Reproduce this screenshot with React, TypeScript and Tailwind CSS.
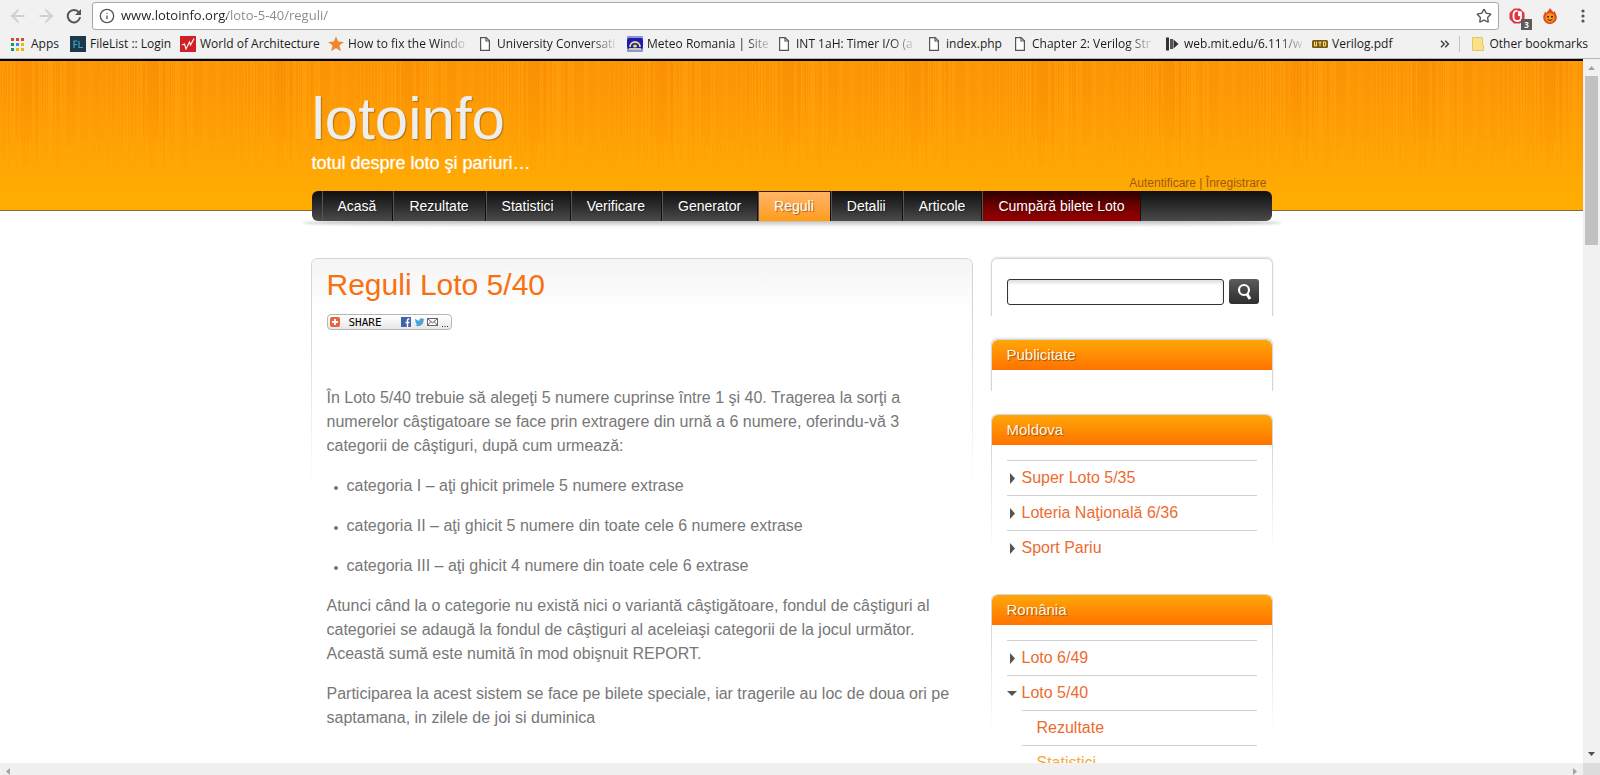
import React from "react";
import { ArrowLeft, ArrowRight, Info, Star } from "lucide-react";

/* ---------- Browser chrome ---------- */

const PageIcon = () => (
  <svg viewBox="0 0 16 16" className="size-4" fill="#fff" stroke="#555" strokeWidth="1.2">
    <path d="M3.6 1.6h5.6l3.2 3.2v9.6H3.6z" />
    <path d="M9 1.8v3.2h3.3" fill="none" />
  </svg>
);

const APP_COLORS = ["#db4437", "#db4437", "#e0433c", "#0f9d58", "#4285f4", "#f4b400", "#0f9d58", "#f4b400", "#f4b400"];

const AppsIcon = () => (
  <svg viewBox="0 0 16 16" className="size-4" shapeRendering="crispEdges">
    {APP_COLORS.map((c, i) => (
      <rect key={i} x={(i % 3) * 5} y={2 + Math.floor(i / 3) * 5} width="3" height="3" fill={c} />
    ))}
  </svg>
);

const FileListIcon = () => (
  <svg viewBox="0 0 16 16" className="size-4" fill="none">
    <rect width="16" height="16" fill="#1d3a4c" />
    <path d="M4 12V5h3.5M4 8.5h3M9 5v6.5h4" stroke="#35a5c0" strokeWidth="1.2" />
  </svg>
);

const ArchitectureIcon = () => (
  <svg viewBox="0 0 16 16" className="size-4" fill="none">
    <rect width="16" height="16" fill="#cf2027" />
    <path d="M2 9l2.500-1L6 13l3.500-7 1 3L14 2.500" stroke="#fff" strokeWidth="1.1" />
  </svg>
);

const OrangeStarIcon = () => (
  <svg viewBox="0 0 16 16" className="size-4">
    <path d="M8 .3l2.100 5.300 5.700.3-4.400 3.600 1.500 5.700L8 12.100l-4.900 3.100 1.500-5.700L.2 5.900l5.700-.3z" fill="#f0852d" />
  </svg>
);

const MeteoIcon = () => (
  <svg viewBox="0 0 16 16" className="size-4">
    <rect width="16" height="16" rx="1" fill="#8d93dc" />
    <rect y="2" width="16" height="11" rx="2" fill="#1c1cb4" />
    <path d="M3 11a5 5 0 0 1 10 0" stroke="#e8e060" strokeWidth="1.800" fill="none" />
    <ellipse cx="8" cy="10" rx="2" ry="1.500" fill="#e8e060" />
    <rect x="2" y="12" width="12" height="2" fill="#c8ccb0" />
  </svg>
);

const MitIcon = () => (
  <svg viewBox="0 0 16 16" className="size-4" fill="#333">
    <rect x="2" y="1.500" width="3" height="13" />
    <rect x="6" y="3" width="3" height="10" fill="#555" />
    <path d="M9.500 3.500l5 4.500-5 4.500z" />
  </svg>
);

const UtdIcon = () => (
  <svg viewBox="0 0 16 16" className="size-4" fill="none">
    <rect y="4" width="16" height="8" rx="1.500" fill="#7a5a12" />
    <path d="M2.500 5.800v4h2v-4M6.500 6.200h3M8 6.200v4M11.500 6v4h1.500l.7-1V7l-.7-1z" stroke="#f6e27a" strokeWidth="1.100" />
  </svg>
);

type Bookmark = { label: string; icon: React.ReactNode; width: string; fade?: boolean };

const BOOKMARKS: Bookmark[] = [
  { label: "Apps", icon: <AppsIcon />, width: "w-[59px]" },
  { label: "FileList :: Login", icon: <FileListIcon />, width: "w-[110px]" },
  { label: "World of Architecture", icon: <ArchitectureIcon />, width: "w-[148px]" },
  { label: "How to fix the Windo", icon: <OrangeStarIcon />, width: "w-[149px]", fade: true },
  { label: "University Conversati", icon: <PageIcon />, width: "w-[150px]", fade: true },
  { label: "Meteo Romania | Site", icon: <MeteoIcon />, width: "w-[149px]", fade: true },
  { label: "INT 1aH: Timer I/O (a", icon: <PageIcon />, width: "w-[150px]", fade: true },
  { label: "index.php", icon: <PageIcon />, width: "w-[86px]" },
  { label: "Chapter 2: Verilog Str", icon: <PageIcon />, width: "w-[152px]", fade: true },
  { label: "web.mit.edu/6.111/w", icon: <MitIcon />, width: "w-[148px]", fade: true },
  { label: "Verilog.pdf", icon: <UtdIcon />, width: "w-[110px]" },
];

function BrowserBar() {
  return (
    <div className="shrink-0 border-b border-[#b4b4b4] bg-[#f1f1f1] font-['Open_Sans',sans-serif] text-[#1c1c1c]">
      <div className="flex h-[30px] items-center pt-[2px]">
        <button aria-label="Back" className="ml-1 flex w-7 justify-center text-[#cfcfcf]">
          <ArrowLeft size={20} strokeWidth={2.2} />
        </button>
        <button aria-label="Forward" className="flex w-7 justify-center text-[#cfcfcf]">
          <ArrowRight size={20} strokeWidth={2.2} />
        </button>
        <button aria-label="Reload" className="ml-1 mr-2 flex w-5 justify-center">
          <svg viewBox="0 0 16 16" className="size-4" fill="none" stroke="#555" strokeWidth="2">
            <path d="M13 4.500A6.200 6.200 0 1 0 14.100 9.200" />
            <path d="M15 1v6H9z" fill="#555" stroke="none" />
          </svg>
        </button>
        <div className="flex h-7 min-w-0 flex-1 items-center rounded-[3px] border border-[#a6a6a6] bg-white">
          <Info size={16} strokeWidth={2} className="ml-[6px] shrink-0 text-[#555]" />
          <input
            aria-label="Address"
            defaultValue="www.lotoinfo.org/loto-5-40/reguli/"
            className="ml-[6px] min-w-0 flex-1 bg-[linear-gradient(to_right,#222_106px,#888_106px)] bg-clip-text text-[13px] text-transparent outline-none"
          />
          <button aria-label="Bookmark this page" className="mr-[6px]">
            <Star size={16} strokeWidth={2} className="text-[#555]" />
          </button>
        </div>
        <button aria-label="Ad blocker" className="relative ml-[10px] flex">
          <svg viewBox="0 0 16 16" className="size-4" fill="none">
            <path d="M5 .5h6L15.500 5v6L11 15.500H5L.5 11V5z" fill="#e2343f" />
            <path d="M8.500 3Q4.500 2.500 4.500 7v2q0 4 4 4 3.500 0 3.500-3.500V3.500L10 8V3" stroke="#fff" strokeWidth="1.800" />
          </svg>
          <span className="absolute -right-[7px] top-[11px] flex h-[11px] w-[11px] items-center justify-center bg-[#5c5c5c] text-[8px] font-bold text-white">3</span>
        </button>
        <button aria-label="Flame extension" className="ml-[17px] flex">
          <svg viewBox="0 0 16 16" className="size-4">
            <path d="M8 0c1 2 3 2.500 3 4.500l2-1.500c-.3 2 1.800 3.200 1.800 6.200A6.500 6.500 0 0 1 8 16 6.500 6.500 0 0 1 1.200 9.500c0-2.500 1.600-3.500 1.600-6l2 1.500C5 3 7 2.500 8 0z" fill="#e2491d" />
            <circle cx="8" cy="9.800" r="4.600" fill="#f79a1c" />
            <circle cx="6" cy="8.800" r="1" fill="#40200c" />
            <circle cx="10" cy="8.800" r="1" fill="#40200c" />
            <path d="M5.500 11.500q2.500 2 5 0" stroke="#40200c" fill="none" />
          </svg>
        </button>
        <button aria-label="Menu" className="ml-[17px] mr-[9px] flex">
          <svg viewBox="0 0 16 16" className="size-4" fill="#555">
            <circle cx="8" cy="3" r="1.600" />
            <circle cx="8" cy="8" r="1.600" />
            <circle cx="8" cy="13" r="1.600" />
          </svg>
        </button>
      </div>
      <div className="flex h-7 items-center pl-[11px] text-[12px]">
        {BOOKMARKS.map((b) => (
          <a key={b.label} href="#" className={`flex shrink-0 items-center gap-1 ${b.width}`}>
            <span className="shrink-0">{b.icon}</span>
            <span className={b.fade ? "whitespace-nowrap [mask-image:linear-gradient(to_right,#000_80%,rgba(0,0,0,.15))]" : "whitespace-nowrap"}>
              {b.label}
            </span>
          </a>
        ))}
        <button aria-label="More bookmarks" className="ml-auto">
          <svg viewBox="0 0 10 8" className="h-2 w-[10px]" fill="none" stroke="#444" strokeWidth="1.500">
            <path d="M1 .8L4.200 4 1 7.200M5.200.8L8.400 4 5.200 7.200" />
          </svg>
        </button>
        <span className="ml-[9px] h-4 w-px bg-[#c4c4c4]" />
        <a href="#" className="ml-3 mr-3 flex items-center gap-[5px] whitespace-nowrap">
          <svg viewBox="0 0 12 14" className="h-[14px] w-3">
            <path d="M.5.5h10v8h1v5H.5z" fill="#fbe08a" stroke="#e5c661" />
          </svg>
          Other bookmarks
        </a>
      </div>
    </div>
  );
}

/* ---------- Site header ---------- */

// Pseudo-random but stable streaks, tiled every 127 px.
const STREAKS = Array.from({ length: 127 }, (_, i) => {
  const r = Math.abs(Math.sin(i * 12.9898) * 43758.5453) % 1;
  const cluster = 0.5 + 0.5 * Math.cos(((i - 30) / 127) * Math.PI * 2);
  return { x: i, dark: r > 0.35, alpha: 0.06 + 0.26 * r * (0.4 + cluster * 0.6), h: 70 + ((r * 997) % 1) * 60 };
});

function Texture() {
  return (
    <svg aria-hidden="true" className="absolute inset-0 h-full w-full [mask-image:linear-gradient(#000_20%,transparent_85%)]" shapeRendering="crispEdges">
      <defs>
        <pattern id="streaks" width="127" height="150" patternUnits="userSpaceOnUse">
          {STREAKS.map((s) => (
            <rect key={s.x} x={s.x} y="0" width="1" height={s.h} fill={s.dark ? "#f07a00" : "#ffb520"} opacity={s.alpha} />
          ))}
        </pattern>
      </defs>
      <rect width="100%" height="100%" fill="url(#streaks)" />
    </svg>
  );
}

const NAV = ["Acasă", "Rezultate", "Statistici", "Verificare", "Generator", "Reguli", "Detalii", "Articole", "Cumpără bilete Loto"];

function navTone(label: string) {
  if (label === "Reguli") return "bg-linear-to-b from-[#ffb566] to-[#ff9c0a] shadow-[inset_0_1px_0_#2a1c08]";
  if (label === "Cumpără bilete Loto") return "bg-linear-to-b from-[#2a0000] via-[#700000] to-[#980000]";
  return "";
}

function SiteHeader() {
  return (
    <>
      <header className="relative h-[152px] border-b border-t-2 border-b-[#7d6a45] border-t-black bg-[linear-gradient(#ff9808,#ffa505_60%,#ffad00)]">
        <Texture />
        <div className="relative mx-auto flex max-w-[960px] items-end justify-between pt-[26px]">
          <div>
            <h1 className="text-[60px] leading-[64px] text-[#eee] [text-shadow:1px_1px_1px_rgba(120,80,20,.6)]">lotoinfo</h1>
            <p className="text-[18px] leading-6 text-white [text-shadow:0_0_1px_rgba(255,255,255,.7)]">totul despre loto şi pariuri…</p>
          </div>
          <p className="-mb-4 pr-[5px] text-[12px] leading-4 text-[#9a5a14]">
            <a href="#">Autentificare</a> | <a href="#">Înregistrare</a>
          </p>
        </div>
      </header>
      <div className="relative mx-auto -mt-5 max-w-[960px]">
        <div className="absolute -inset-x-[10px] top-[28px] h-2 rounded-[50%/100%] bg-linear-to-b from-[#aaa] to-transparent blur-[1px]" />
        <nav className="relative flex h-[30px] rounded-md bg-linear-to-b from-[#101010] to-[#4b4b4b] pl-[10px]">
          {NAV.map((label) => (
            <a
              key={label}
              href="#"
              className={`border-l border-r border-l-[#555] border-r-[#111] pl-[15px] pr-4 text-[14px] leading-[30px] text-white [text-shadow:1px_1px_1px_rgba(0,0,0,.4)] ${navTone(label)}`}
            >
              {label}
            </a>
          ))}
        </nav>
      </div>
    </>
  );
}

/* ---------- Cards ---------- */

const FRAME = "pointer-events-none absolute -inset-x-px -top-px bottom-0 rounded-t-md border border-b-0 border-[#d6d6d6] shadow-[0_-1px_2px_rgba(0,0,0,.12)]";

function ShareButton() {
  return (
    <button className="flex h-4 w-[125px] items-center rounded-[4px] border border-[#b5b5b5] bg-linear-to-b from-white to-[#e8e8e8] px-[2px]">
      <svg viewBox="0 0 10 10" className="size-[10px]">
        <rect width="10" height="10" rx="2" fill="#e8643c" />
        <path d="M5 2v6M2 5h6" stroke="#fff" strokeWidth="1.800" />
      </svg>
      <span className="ml-[9px] font-['DejaVu_Sans_Mono',monospace] text-[11px] leading-none text-black">SHARE</span>
      <svg viewBox="0 0 48 12" className="ml-auto h-3 w-12">
        <rect x="0" y="1" width="10" height="10" fill="#3d64a8" />
        <path d="M8.500 3H7.500Q6.500 3 6.500 4.200V11M4.500 6.500h4" stroke="#fff" strokeWidth="1.400" fill="none" />
        <path d="M14 9.500c1.200.1 2-.2 2.700-.7-1-.1-1.600-.7-1.800-1.400h.8c-1-.4-1.500-1.200-1.500-2.100l.8.200c-.9-.7-1.100-1.800-.6-2.700 1 1.200 2.300 1.900 4.100 2-.3-1.500.7-2.500 1.900-2.500.6 0 1.100.2 1.500.6l1.200-.5-.7 1.200 1.200-.2-1.100 1.100c.1 3.900-4 7.300-8.500 5z" fill="#4aa3d8" />
        <path d="M26.500 2.500h10v7h-10zM26.500 2.500l5 4.500 5-4.500M26.500 9.500l3.500-4M36.500 9.500L33 5.500" fill="#fff" stroke="#555" strokeWidth=".9" />
        <path d="M41 10.500h1M43.500 10.500h1M46 10.500h1" stroke="#333" strokeWidth="1" />
      </svg>
    </button>
  );
}

function Article() {
  return (
    <main className="relative min-w-0 flex-1 rounded-t-md bg-[linear-gradient(#f4f4f4,#fff_52px)] px-[15px]">
      <div className={`${FRAME} [mask-image:linear-gradient(#000_60px,transparent_230px)]`} />
      <h2 className="pt-2 text-[30px] leading-9 text-[#f8700f]">Reguli Loto 5/40</h2>
      <div className="mb-14 mt-[11px] flex">
        <ShareButton />
      </div>
      <div className="space-y-4 text-[16px] leading-6 text-[#777]">
        <p>
          În Loto 5/40 trebuie să alegeţi 5 numere cuprinse între 1 şi 40. Tragerea la sorţi a numerelor câştigatoare se face prin extragere din urnă a 6 numere,
          oferindu-vă 3 categorii de câştiguri, după cum urmează:
        </p>
        <ul className="space-y-4 pl-5">
          {["categoria I – aţi ghicit primele 5 numere extrase", "categoria II – aţi ghicit 5 numere din toate cele 6 numere extrase", "categoria III – aţi ghicit 4 numere din toate cele 6 extrase"].map((t) => (
            <li key={t} className="relative before:absolute before:-left-[13px] before:top-3 before:size-1 before:rounded-full before:bg-[#777]">
              {t}
            </li>
          ))}
        </ul>
        <p>
          Atunci când la o categorie nu există nici o variantă câştigătoare, fondul de câştiguri al categoriei se adaugă la fondul de câştiguri al aceleiaşi
          categorii de la jocul următor. Această sumă este numită în mod obişnuit REPORT.
        </p>
        <p>Participarea la acest sistem se face pe bilete speciale, iar tragerile au loc de doua ori pe saptamana, in zilele de joi si duminica</p>
      </div>
    </main>
  );
}

function Widget({ title, children }: { title: string; children?: React.ReactNode }) {
  return (
    <section className="relative">
      <div className={`${FRAME} ${children ? "[mask-image:linear-gradient(#000_30px,transparent_140px)]" : ""}`} />
      <h3 className="relative rounded-t-md bg-linear-to-b from-[#ffa608] to-[#ff7200] px-[15px] text-[15px] leading-[30px] text-[#fff6e8] [text-shadow:1px_1px_1px_rgba(120,60,0,.7)]">
        {title}
      </h3>
      <div className="relative px-[15px] pb-[6px] pt-[15px]">{children}</div>
    </section>
  );
}

const Row = ({ label, open }: { label: string; open?: boolean }) => (
  <a href="#" className="flex items-center border-t border-[#d2d2d2] leading-[34px] text-[#ec6c30]">
    <svg viewBox="0 0 15 11" className="h-[11px] w-[15px]" fill="#555">
      {open ? <path d="M0 3h10L5 8z" /> : <path d="M3 0l5 5.500L3 11z" />}
    </svg>
    {label}
  </a>
);

function Sidebar() {
  return (
    <aside className="w-[280px] shrink-0 space-y-6 text-[16px]">
      <section className="relative px-[15px] pb-[11px] pt-5">
        <div className={FRAME} />
        <form className="relative flex items-start gap-[5px]" onSubmit={(e) => e.preventDefault()}>
          <input aria-label="Căutare" type="text" className="h-[26px] w-[217px] shrink-0 rounded-[3px] border border-[#333] bg-white px-2 shadow-[inset_0_3px_3px_rgba(0,0,0,.12)] outline-none" />
          <button aria-label="Caută" className="flex h-[25px] w-[30px] shrink-0 items-center justify-center rounded-[3px] bg-linear-to-b from-[#5c5c5c] to-[#2e2e2e]">
            <svg viewBox="0 0 18 18" className="size-[18px]" fill="none" stroke="#fff">
              <circle cx="9" cy="7" r="5" strokeWidth="2.200" />
              <path d="M12 11l3 5" strokeWidth="3" />
            </svg>
          </button>
        </form>
      </section>
      <Widget title="Publicitate" />
      <Widget title="Moldova">
        <Row label="Super Loto 5/35" />
        <Row label="Loteria Naţională 6/36" />
        <Row label="Sport Pariu" />
      </Widget>
      <Widget title="România">
        <Row label="Loto 6/49" />
        <Row label="Loto 5/40" open />
        <div className="pl-[15px]">
          <a href="#" className="block border-t border-[#d2d2d2] pl-[15px] leading-[34px] text-[#ec6c30]">Rezultate</a>
          <a href="#" className="block border-t border-[#d2d2d2] pl-[15px] leading-[34px] text-[#f5a93a]">Statistici</a>
        </div>
      </Widget>
    </aside>
  );
}

/* ---------- Shell ---------- */

export default function App() {
  return (
    <div className="flex h-screen flex-col overflow-hidden bg-white font-['Liberation_Sans',Arial,sans-serif]">
      <BrowserBar />
      <div className="flex min-h-0 flex-1">
        <div className="min-w-0 flex-1 overflow-hidden">
          <SiteHeader />
          <div className="mx-auto mt-[38px] flex max-w-[960px] gap-5">
            <Article />
            <Sidebar />
          </div>
        </div>
        <div className="flex w-[17px] shrink-0 flex-col items-center bg-[#f1f1f1]">
          <svg viewBox="0 0 17 17" className="size-[17px] shrink-0" fill="#a3a3a3">
            <path d="M5 11l3.500-4 3.500 4z" />
          </svg>
          <div className="h-[169px] w-[13px] bg-[#c1c1c1]" />
          <svg viewBox="0 0 17 17" className="mt-auto size-[17px] shrink-0" fill="#505050">
            <path d="M5 6h7l-3.500 4z" />
          </svg>
        </div>
      </div>
      <div className="flex h-3 shrink-0 bg-[#f0f0f0]">
        <svg viewBox="0 0 17 12" className="h-3 w-[17px]" fill="#a3a3a3">
          <path d="M10 5v7L6 8.500z" />
        </svg>
        <svg viewBox="0 0 17 12" className="ml-auto h-3 w-[17px]" fill="#a3a3a3">
          <path d="M7 5v7l4-3.500z" />
        </svg>
        <div className="w-[17px] bg-[#dcdcdc]" />
      </div>
    </div>
  );
}
